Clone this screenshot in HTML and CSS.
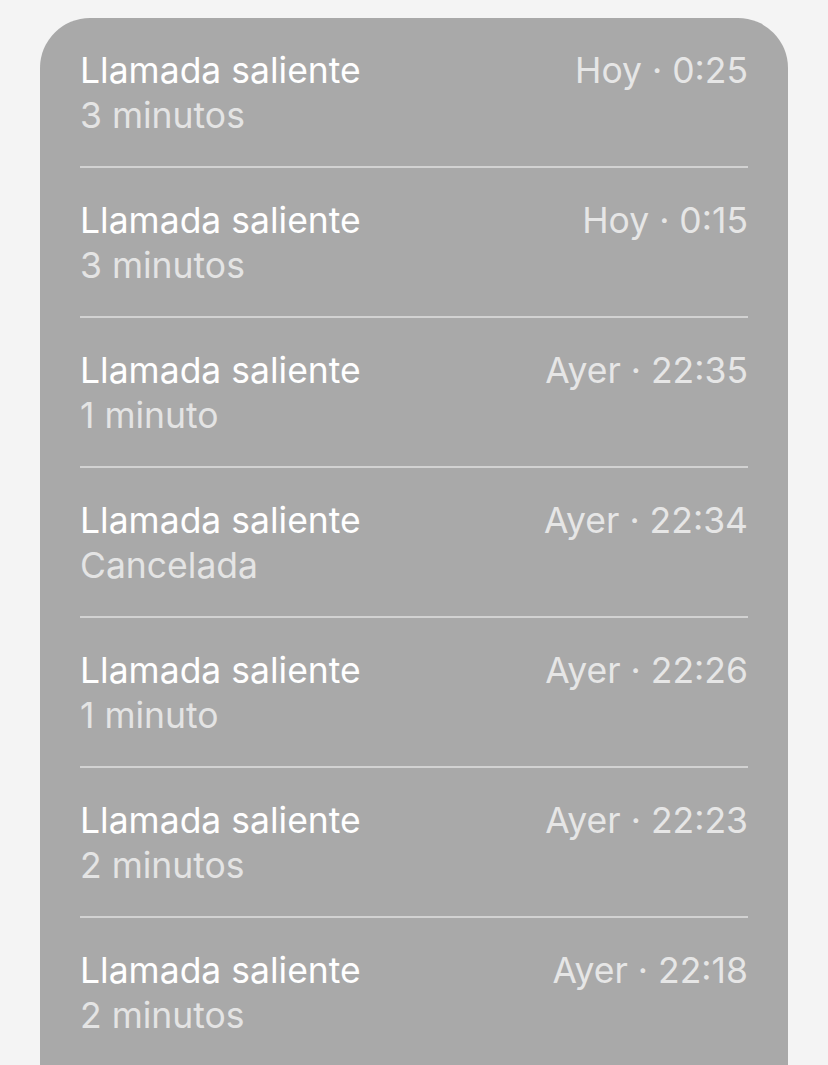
FILE: index.html
```html
<!DOCTYPE html>
<html lang="es">
<head>
<meta charset="utf-8">
<link rel="stylesheet" href="styles.css">
</head>
<body>
<div class="card">
  <div class="row"><div class="line"><span class="title">Llamada saliente</span><span class="time">Hoy · 0:25</span></div><div class="sub">3 minutos</div></div>
  <div class="row"><div class="line"><span class="title">Llamada saliente</span><span class="time">Hoy · 0:15</span></div><div class="sub">3 minutos</div></div>
  <div class="row"><div class="line"><span class="title">Llamada saliente</span><span class="time">Ayer · 22:35</span></div><div class="sub">1 minuto</div></div>
  <div class="row"><div class="line"><span class="title">Llamada saliente</span><span class="time">Ayer · 22:34</span></div><div class="sub">Cancelada</div></div>
  <div class="row"><div class="line"><span class="title">Llamada saliente</span><span class="time">Ayer · 22:26</span></div><div class="sub">1 minuto</div></div>
  <div class="row"><div class="line"><span class="title">Llamada saliente</span><span class="time">Ayer · 22:23</span></div><div class="sub">2 minutos</div></div>
  <div class="row"><div class="line"><span class="title">Llamada saliente</span><span class="time">Ayer · 22:18</span></div><div class="sub">2 minutos</div></div>
</div>
</body>
</html>
```
FILE: styles.css
```css
html, body {
  margin: 0;
  padding: 0;
  background: #f4f4f4;
  height: 1065px;
  overflow: hidden;
}
body {
  box-sizing: border-box;
  padding: 18px 40px 0 40px;
  font-family: Inter, "Noto Sans", sans-serif;
}
.card {
  background: #a9a9a9;
  border-radius: 50px 50px 0 0;
  padding: 0 40px;
  height: 1047px;
  overflow: hidden;
}
.row {
  height: 148px;
  border-bottom: 2px solid #d2d2d2;
}
.line {
  display: flex;
  justify-content: space-between;
  padding-top: 31px;
  font-size: 35.5px;
  line-height: 44px;
}
.title {
  color: #ffffff;
}
.time {
  color: #e6e6e6;
}
.sub {
  font-size: 35.5px;
  line-height: 46px;
  color: #e4e4e4;
}
.row:last-child {
  border-bottom: none;
}
```
